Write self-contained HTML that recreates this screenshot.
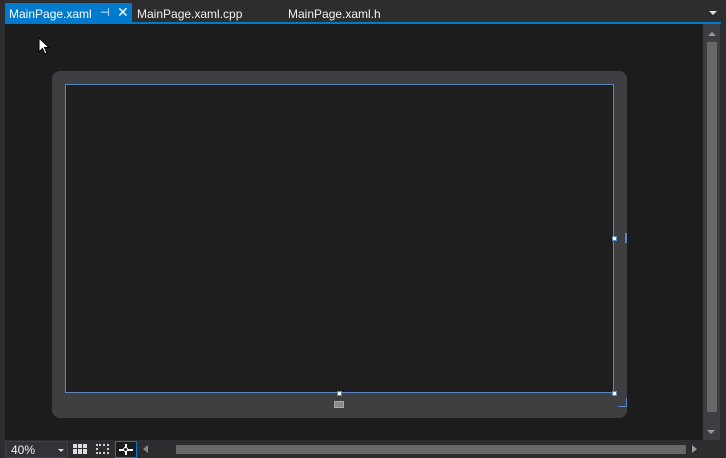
<!DOCTYPE html>
<html><head><style>
*{margin:0;padding:0;box-sizing:border-box}
body{width:726px;height:458px;background:#2d2d30;position:relative;overflow:hidden;font-family:"Liberation Sans",sans-serif;font-size:12px}
.a{position:absolute}
</style></head><body>
<div class="a" style="left:5px;top:3px;width:127px;height:20px;background:#007acc"></div>
<div class="a" style="left:9px;top:7px;color:#fff">MainPage.xaml</div>
<div class="a" style="left:100px;top:6px;color:#fff;font-size:11px">⊣</div>
<div class="a" style="left:117px;top:4px;color:#fff;font-size:14px">✕</div>
<div class="a" style="left:137px;top:7px;color:#f1f1f1">MainPage.xaml.cpp</div>
<div class="a" style="left:288px;top:7px;color:#f1f1f1">MainPage.xaml.h</div>
<div class="a" style="left:709px;top:11px;width:0;height:0;border-left:4px solid transparent;border-right:4px solid transparent;border-top:4px solid #ddd"></div>
<div class="a" style="left:5px;top:22px;width:716px;height:2px;background:#007acc"></div>
<div class="a" style="left:5px;top:24px;width:698px;height:416px;background:#1c1c1d"></div>
<svg class="a" style="left:38px;top:37px" width="12" height="18"><path d="M1 1 L1 15 L4.5 11.5 L7 17 L9 16 L6.5 10.5 L11 10.5 Z" fill="#fff" stroke="#000" stroke-width="1"/></svg>
<div class="a" style="left:52px;top:71px;width:575px;height:347px;background:#3f3f41;border-radius:8px"></div>
<div class="a" style="left:65px;top:84px;width:549px;height:309px;background:#1e1e1e;border:1px solid #5a86c4"></div>
<div class="a" style="left:612px;top:236px;width:5px;height:5px;background:#fff;border:1px solid #5a86c4"></div>
<div class="a" style="left:337px;top:391px;width:5px;height:5px;background:#fff;border:1px solid #5a86c4"></div>
<div class="a" style="left:612px;top:391px;width:5px;height:5px;background:#fff;border:1px solid #5a86c4"></div>
<div class="a" style="left:625px;top:233px;width:2px;height:10px;background:#5a86c4"></div>
<div class="a" style="left:618px;top:398px;width:9px;height:9px;border-right:1px solid #5a86c4;border-bottom:1px solid #5a86c4"></div>
<div class="a" style="left:334px;top:401px;width:10px;height:7px;background:#888;border:1px solid #aaa"></div>
<div class="a" style="left:703px;top:24px;width:17px;height:416px;background:#3e3e42"></div>
<div class="a" style="left:708px;top:32px;width:0;height:0;border-left:4px solid transparent;border-right:4px solid transparent;border-bottom:4px solid #999"></div>
<div class="a" style="left:707px;top:42px;width:10px;height:370px;background:#686868"></div>
<div class="a" style="left:707px;top:430px;width:0;height:0;border-left:4px solid transparent;border-right:4px solid transparent;border-top:4px solid #999"></div>
<div class="a" style="left:5px;top:441px;width:63px;height:17px;background:#333337;border:1px solid #3f3f46"></div>
<div class="a" style="left:11px;top:443px;color:#f1f1f1">40%</div>
<div class="a" style="left:58px;top:449px;width:0;height:0;border-left:3px solid transparent;border-right:3px solid transparent;border-top:3px solid #ddd"></div>
<div class="a" style="left:73px;top:444px;width:14px;height:10px;background:repeating-linear-gradient(90deg,#ddd 0 4px,transparent 4px 5px)"></div>
<div class="a" style="left:73px;top:448px;width:14px;height:1px;background:#2d2d30"></div>
<div class="a" style="left:96px;top:444px;width:13px;height:10px;border:2px dotted #ccc"></div>
<div class="a" style="left:115px;top:441px;width:22px;height:17px;border:1px solid #007acc;background:#1c1c1d"></div>
<div class="a" style="left:119px;top:449px;width:14px;height:1.5px;background:#fff"></div>
<div class="a" style="left:125px;top:444px;width:1.5px;height:11px;background:#fff"></div>
<div class="a" style="left:123px;top:447px;width:5px;height:5px;border-radius:50%;background:#1c1c1d;border:1px solid #fff"></div>
<div class="a" style="left:143px;top:445px;width:0;height:0;border-top:4px solid transparent;border-bottom:4px solid transparent;border-right:5px solid #888"></div>
<div class="a" style="left:176px;top:445px;width:510px;height:9px;background:#686868"></div>
<div class="a" style="left:692px;top:445px;width:0;height:0;border-top:4px solid transparent;border-bottom:4px solid transparent;border-left:5px solid #999"></div>
</body></html>
